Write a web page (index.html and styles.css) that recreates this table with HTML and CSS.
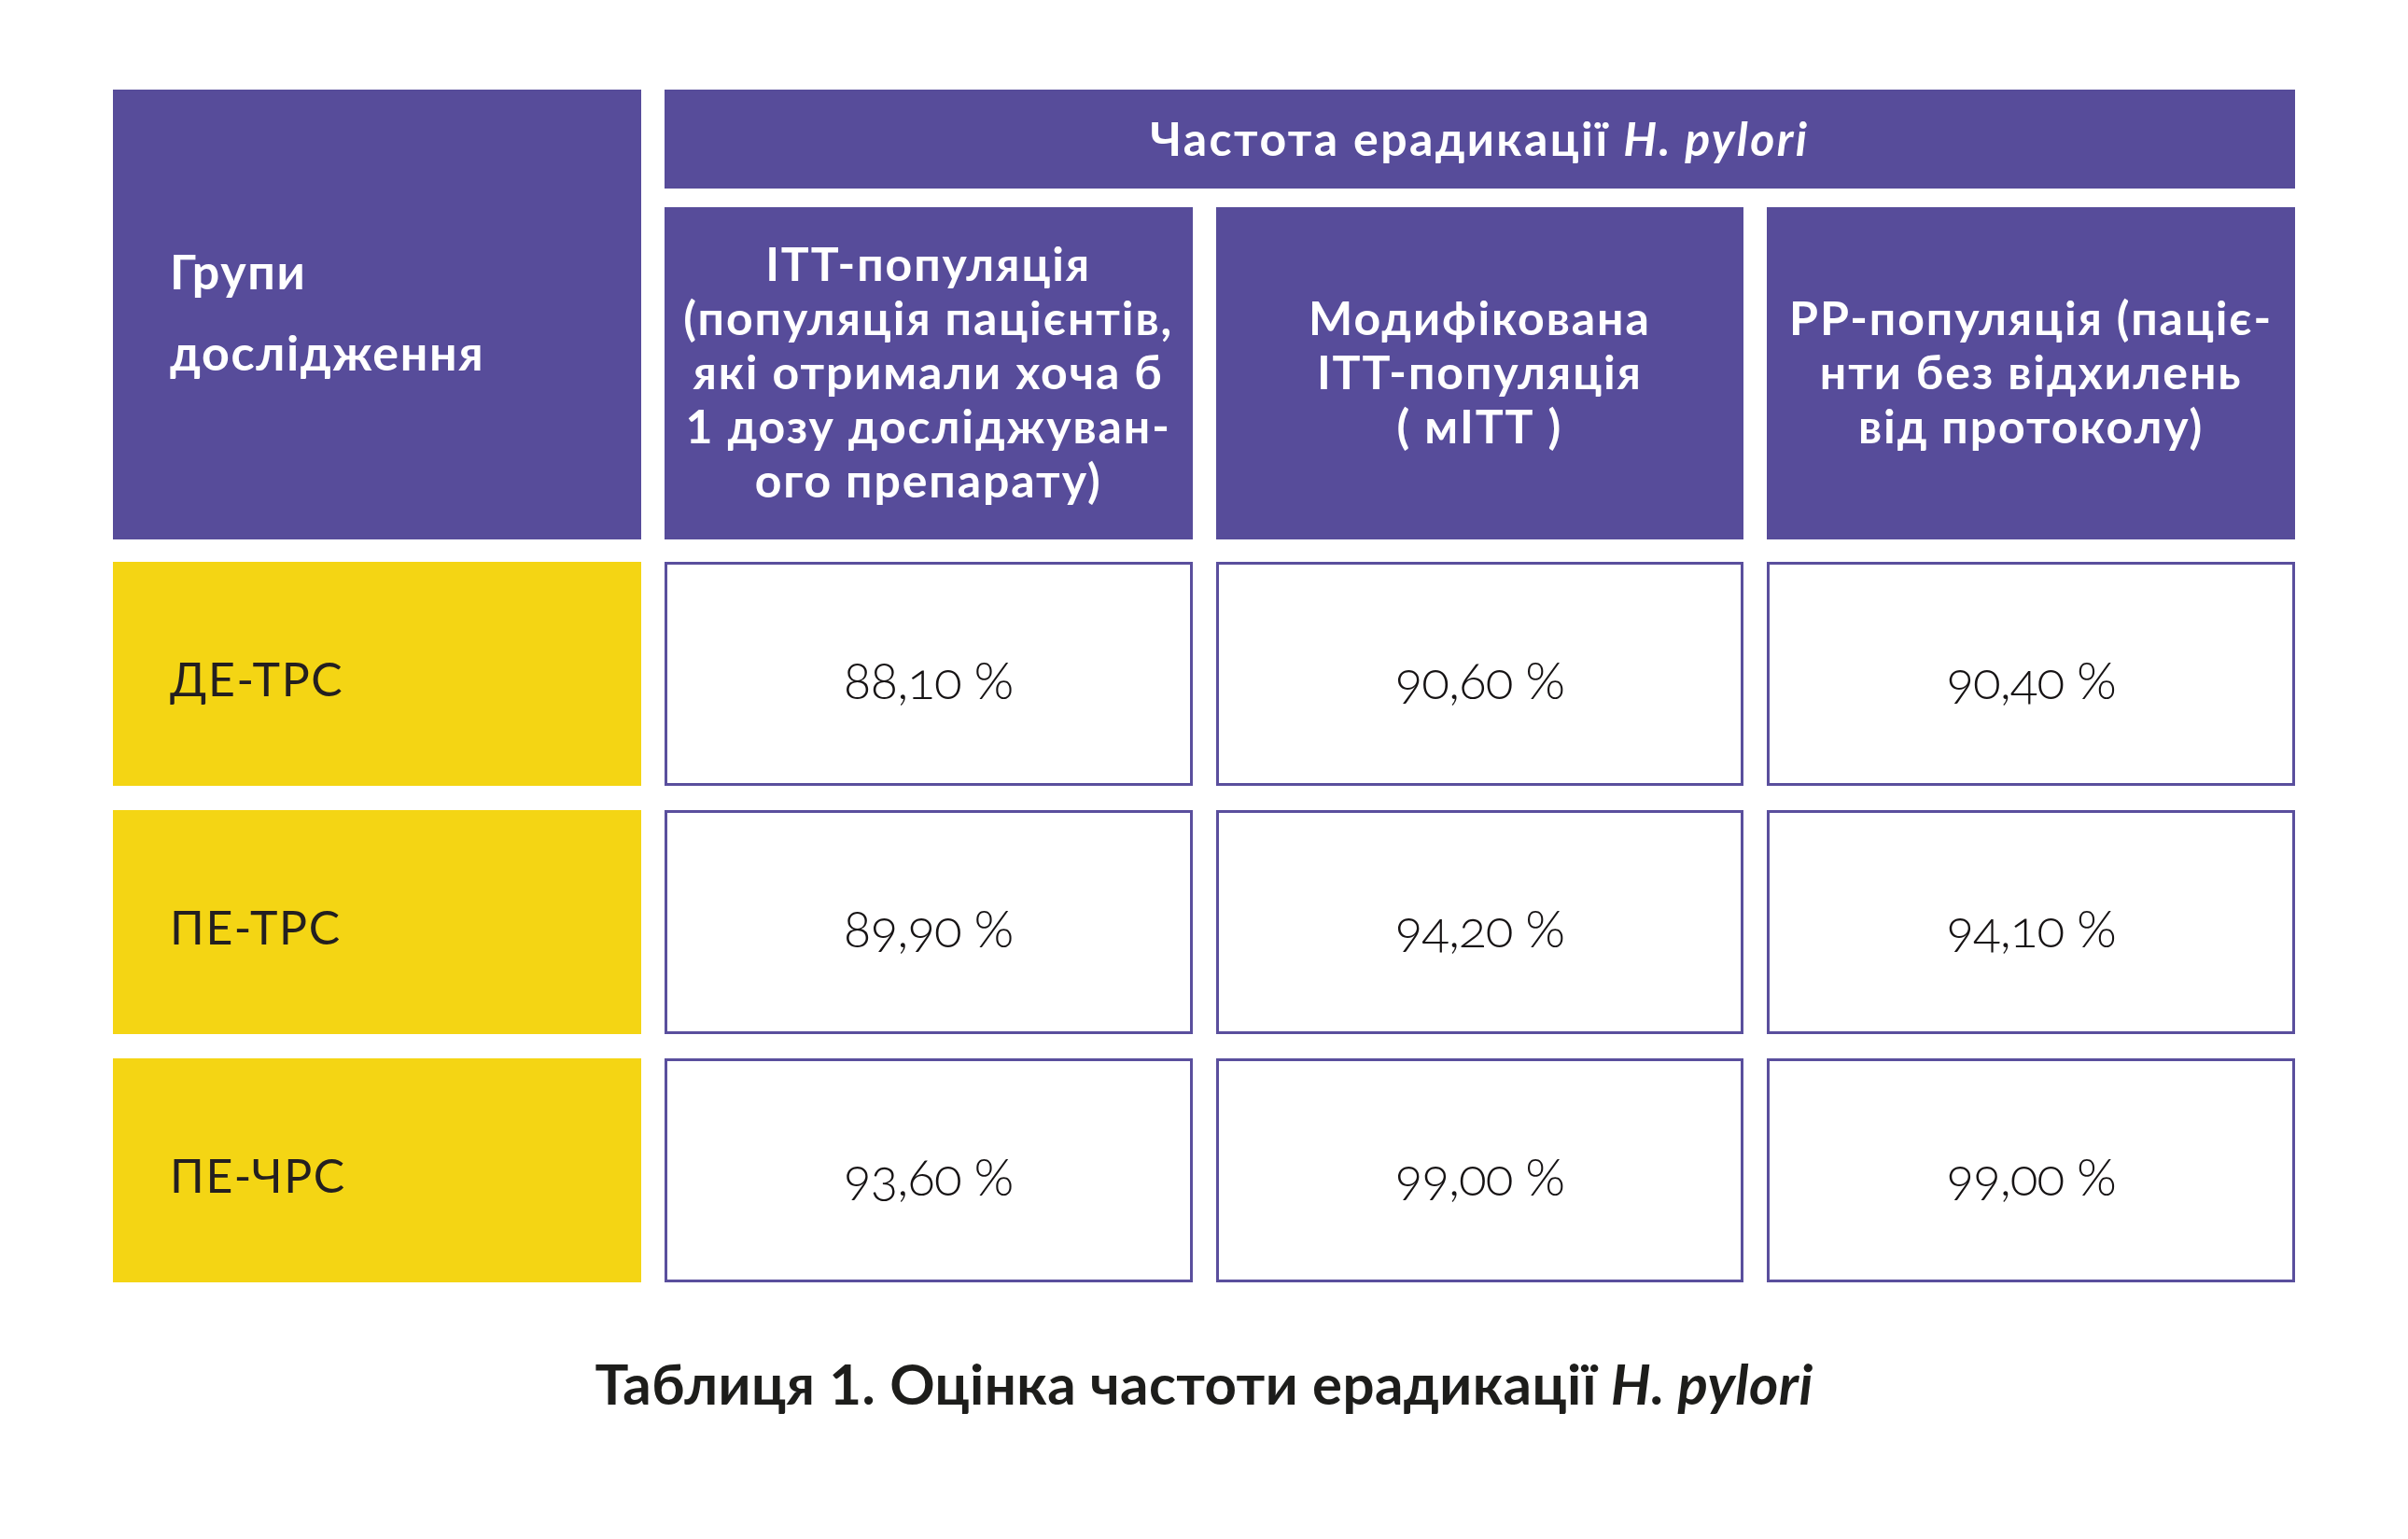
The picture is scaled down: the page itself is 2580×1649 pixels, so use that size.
FILE: index.html
```html
<!DOCTYPE html>
<html lang="uk">
<head>
<meta charset="utf-8">
<title>Таблиця 1. Оцінка частоти ерадикації H. pylori</title>
<link rel="stylesheet" href="styles.css">
</head>
<body>
<main class="page">
  <section class="table">
    <div class="head">
      <div class="cell head-cell groups">
        <span class="groups-line">Групи</span>
        <span class="groups-line">дослідження</span>
      </div>
      <div class="cell head-cell top"><span>Частота ерадикації <i>H. pylori</i></span></div>
      <div class="cell head-cell sub"><span>ІТТ-популяція<br>(популяція пацієнтів,<br>які отримали хоча б<br>1 дозу досліджуван-<br>ого препарату)</span></div>
      <div class="cell head-cell sub"><span>Модифікована<br>ІТТ-популяція<br>( мІТТ )</span></div>
      <div class="cell head-cell sub"><span>РР-популяція (паціє-<br>нти без відхилень<br>від протоколу)</span></div>
    </div>
    <div class="body">
      <div class="cell label">ДЕ-ТРС</div>
      <div class="cell value">88,10 %</div>
      <div class="cell value">90,60 %</div>
      <div class="cell value">90,40 %</div>

      <div class="cell label">ПЕ-ТРС</div>
      <div class="cell value">89,90 %</div>
      <div class="cell value">94,20 %</div>
      <div class="cell value">94,10 %</div>

      <div class="cell label">ПЕ-ЧРС</div>
      <div class="cell value">93,60 %</div>
      <div class="cell value">99,00 %</div>
      <div class="cell value">99,00 %</div>
    </div>
  </section>
  <p class="caption">Таблиця 1. Оцінка частоти ерадикації <i>H. pylori</i></p>
</main>
</body>
</html>
```

FILE: styles.css
```css
html, body {
  margin: 0;
  padding: 0;
  background: #ffffff;
}

body {
  font-family: "Lato", "Open Sans", "Noto Sans", sans-serif;
  color: #231f20;
}

.page {
  width: 2580px;
  height: 1649px;
  padding-top: 96px;
  box-sizing: border-box;
  display: flex;
  flex-direction: column;
  align-items: center;
}

.table {
  width: 2338px;
  display: flex;
  flex-direction: column;
  gap: 24px;
}

.head {
  display: grid;
  grid-template-columns: repeat(4, 1fr);
  grid-template-rows: 106px 356px;
  column-gap: 25px;
  row-gap: 20px;
}

.body {
  display: grid;
  grid-template-columns: repeat(4, 1fr);
  grid-auto-rows: 240px;
  column-gap: 25px;
  row-gap: 26px;
}

.cell {
  box-sizing: border-box;
  display: flex;
  align-items: center;
}

.head-cell {
  background: #574c9a;
  color: #ffffff;
  font-weight: 700;
}

.groups {
  grid-row: 1 / span 2;
  grid-column: 1;
  flex-direction: column;
  align-items: flex-start;
  justify-content: center;
  padding-left: 61px;
  padding-bottom: 6px;
  font-size: 52px;
  line-height: 87px;
  letter-spacing: 1.6px;
}

.top {
  grid-column: 2 / span 3;
  justify-content: center;
  font-size: 50px;
  letter-spacing: 2.4px;
  padding-bottom: 2px;
}

.top i,
.caption i {
  font-style: italic;
}

.sub {
  justify-content: center;
  text-align: center;
  font-size: 50px;
  line-height: 58px;
  letter-spacing: 1.9px;
  white-space: nowrap;
  padding-bottom: 5px;
}

.label {
  background: #f4d514;
  padding-left: 61px;
  padding-top: 10px;
  font-size: 50px;
  font-weight: 400;
  letter-spacing: 1.6px;
  color: #231f20;
}

.value {
  border: 3px solid #5a4f9d;
  justify-content: center;
  padding-top: 12px;
  font-size: 55px;
  font-weight: 300;
  letter-spacing: -1px;
  font-variant-numeric: oldstyle-nums;
  color: #161314;
}

.caption {
  margin: 72px 0 0 0;
  font-size: 60px;
  line-height: 72px;
  font-weight: 700;
  letter-spacing: 0.4px;
  color: #1d1d1b;
  text-align: center;
}
```
